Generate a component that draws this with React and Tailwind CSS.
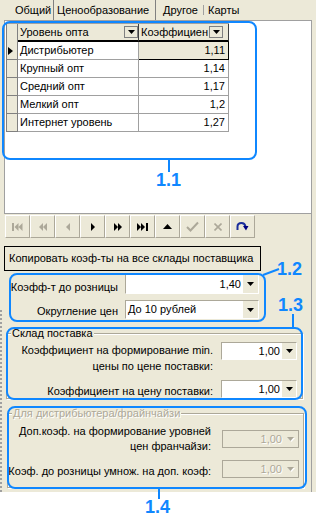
import React from 'react';

const rows = [
  { name: 'Дистрибьютер', k: '1,11', current: true },
  { name: 'Крупный опт', k: '1,14' },
  { name: 'Средний опт', k: '1,17' },
  { name: 'Мелкий опт', k: '1,2' },
  { name: 'Интернет уровень', k: '1,27' },
];

const GRAY = '#aca899';

const Arrow = ({ color = '#000' }) => (
  <svg width="7" height="4" viewBox="0 0 7 4">
    <path d="M0 0h7L3.5 4z" fill={color} />
  </svg>
);

const HeadBtn = () => (
  <span className="flex h-[12px] w-[14px] shrink-0 items-center justify-center border border-[#808080] bg-[#ece9d8]">
    <Arrow />
  </span>
);

function Tabs() {
  return (
    <div className="flex h-[20px] pl-[14px] leading-[20px]">
      <div className="w-[39px] pl-px">Общий</div>
      <div className="w-[103px] border-x border-[#808080] pl-[3px]">Ценообразование</div>
      <div className="w-[47px] pl-[7px]">Другое</div>
      <div className="my-[5px] w-px bg-[#a0a0a0]" />
      <div className="pl-[4px]">Карты</div>
    </div>
  );
}

function Grid() {
  return (
    <div className="w-[223px] border-l border-[#808080]">
      {/* header */}
      <div className="flex h-[19px] border-t border-[#a0a0a0]">
        <div className="w-[11px] border-r border-[#808080] bg-[#ece9d8]" />
        <div className="flex w-[121px] items-center border-r border-b-2 border-r-[#404040] border-b-black bg-[#ece9d8] pl-[2px]">
          <span className="flex-1 whitespace-nowrap">Уровень опта</span>
          <HeadBtn />
        </div>
        <div className="flex w-[90px] items-center border-r border-b-2 border-r-[#404040] border-b-black bg-[#ece9d8] pl-[2px] pr-[5px]">
          <span className="flex-1 whitespace-nowrap">Коэффициен</span>
          <HeadBtn />
        </div>
      </div>
      {rows.map((r) => (
        <div key={r.name} className="flex h-[18px]">
          <div className="flex w-[11px] items-center border-r border-b border-[#808080] bg-[#ece9d8] pl-[1px]">
            {r.current && (
              <svg width="5" height="8" viewBox="0 0 5 8">
                <path d="M0 0v8l5-4z" fill="#000" />
              </svg>
            )}
          </div>
          <div className="w-[121px] border-r border-b border-[#a0a0a0] pl-[2px] leading-[17px] whitespace-nowrap">
            {r.name}
          </div>
          <div
            className={
              r.current
                ? 'w-[90px] border-r border-b border-black bg-[#ece9d8] pr-[3px] text-right leading-[17px]'
                : 'w-[90px] border-r border-b border-[#a0a0a0] pr-[3px] text-right leading-[17px]'
            }
          >
            {r.k}
          </div>
        </div>
      ))}
    </div>
  );
}

function Icon({ kind, c }) {
  switch (kind) {
    case 'first':
      return (
        <svg width="11" height="8" viewBox="0 0 11 8">
          <rect x="0" y="0" width="2" height="8" fill={c} />
          <path d="M6.5 0v8L2.5 4zM10.5 0v8L6.5 4z" fill={c} />
        </svg>
      );
    case 'priorPage':
      return (
        <svg width="8" height="8" viewBox="0 0 8 8">
          <path d="M4 0v8L0 4zM8 0v8L4 4z" fill={c} />
        </svg>
      );
    case 'prior':
      return (
        <svg width="4" height="8" viewBox="0 0 4 8">
          <path d="M4 0v8L0 4z" fill={c} />
        </svg>
      );
    case 'next':
      return (
        <svg width="4" height="8" viewBox="0 0 4 8">
          <path d="M0 0v8l4-4z" fill={c} />
        </svg>
      );
    case 'nextPage':
      return (
        <svg width="8" height="8" viewBox="0 0 8 8">
          <path d="M0 0v8l4-4zM4 0v8l4-4z" fill={c} />
        </svg>
      );
    case 'last':
      return (
        <svg width="11" height="8" viewBox="0 0 11 8">
          <path d="M0 0v8l4-4zM4 0v8l4-4z" fill={c} />
          <rect x="9" y="0" width="2" height="8" fill={c} />
        </svg>
      );
    case 'insert':
      return (
        <svg width="9" height="5" viewBox="0 0 9 5">
          <path d="M0 5h9L4.5 0z" fill={c} />
        </svg>
      );
    case 'post':
      return (
        <svg width="13" height="11" viewBox="0 0 13 11">
          <path d="M1 6l3.5 3.5L12 1.5" stroke={c} strokeWidth="2" fill="none" />
        </svg>
      );
    case 'cancel':
      return (
        <svg width="8" height="8" viewBox="0 0 8 8">
          <path d="M0.5 0.5l7 7M7.5 0.5l-7 7" stroke={c} strokeWidth="1.6" />
        </svg>
      );
    default:
      return (
        <svg width="13" height="9" viewBox="0 0 13 9">
          <path d="M1.5 8V4.5C1.5 2 3.5 1 5.5 1S9 2 9.5 4.5" stroke="#1c2f9c" strokeWidth="2" fill="none" />
          <path d="M7 4h5.5L10 8.5z" fill="#000080" />
        </svg>
      );
  }
}

const navButtons = [
  ['first', GRAY],
  ['priorPage', GRAY],
  ['prior', GRAY],
  ['next', '#000'],
  ['nextPage', '#000'],
  ['last', '#000'],
  ['insert', '#000'],
  ['post', GRAY],
  ['cancel', GRAY],
  ['refresh', '#000080'],
];

function Navigator() {
  return (
    <div className="ml-[5px] mt-px flex h-[23px]">
      {navButtons.map(([k, c]) => (
        <div
          key={k}
          className="flex h-[23px] w-[25px] items-center justify-center border border-t-white border-l-white border-r-[#aca899] border-b-[#aca899] bg-[#ece9d8]"
        >
          <Icon kind={k} c={c} />
        </div>
      ))}
    </div>
  );
}

function Combo({ value, size, left = false, disabled = false, btn = 'w-[14px]' }) {
  return (
    <div
      className={
        disabled
          ? `flex shrink-0 items-center border border-[#aca899] bg-[#ece9d8] text-[#aca899] [text-shadow:1px_1px_0_#fff] ${size}`
          : `flex shrink-0 items-stretch border border-t-[#aca899] border-l-[#aca899] border-r-white border-b-white bg-white ${size}`
      }
    >
      <span
        className={
          left
            ? 'flex flex-1 items-center whitespace-nowrap pl-[2px]'
            : 'flex flex-1 items-center justify-end whitespace-nowrap pr-[2px]'
        }
      >
        {value}
      </span>
      <span className={disabled ? `flex items-center justify-center ${btn}` : `flex items-center justify-center bg-[#ece9d8] ${btn}`}>
        {disabled ? (
          <svg width="8" height="5" viewBox="0 0 8 5">
            <path d="M1 1h7L4.5 5z" fill="#fff" />
            <path d="M0 0h7L3.5 4z" fill={GRAY} />
          </svg>
        ) : (
          <Arrow />
        )}
      </span>
    </div>
  );
}

export default function App() {
  return (
    <div className="relative h-[518px] w-[316px] overflow-hidden bg-white font-['Liberation_Sans',Arial,sans-serif] text-[11px] text-black">
      <div className="relative h-[492px] bg-[#ece9d8]">
        <Tabs />
        <div className="h-[472px] w-[312px] border-r border-[#a0a0a0]">
          <div className="ml-[4px] h-[194px] border-b border-l border-t border-[#a0a0a0] bg-white pl-px pt-[2px]">
            <Grid />
          </div>

          <Navigator />

          <button className="ml-[4px] mt-[8px] block h-[25px] w-[257px] border border-black bg-[#ece9d8] pl-[4px] text-left leading-[23px]">
            Копировать коэф-ты на все склады поставщика
          </button>

          {/* retail coefficient */}
          <div className="mt-[3px] flex h-[20px] items-start">
            <div className="ml-[10px] w-[108px] whitespace-nowrap pt-[6px] text-right leading-[14px]">Коэфф-т до розницы</div>
            <div className="ml-[7px]">
              <Combo value="1,40" size="h-[20px] w-[134px]" btn="w-[15px]" />
            </div>
          </div>
          <div className="mt-[6px] flex h-[19px] items-start">
            <div className="ml-[10px] w-[108px] whitespace-nowrap pt-[4px] text-right leading-[14px]">Округление цен</div>
            <div className="ml-[7px]">
              <Combo value="До 10 рублей" left size="h-[19px] w-[134px]" btn="w-[15px]" />
            </div>
          </div>

          {/* Склад поставка */}
          <div className="relative ml-[6px] mt-[14px] h-[66px] w-[297px] border border-[#aca899] shadow-[inset_1px_1px_0_#fff,1px_1px_0_#fff]">
            <span className="absolute -top-[8px] left-[4px] bg-[#ece9d8] px-px leading-[15px]">Склад поставка</span>
            <div className="flex items-start pt-[8px]">
              <div className="w-[206px] text-right leading-[16px]">
                Коэффициент на формирование min.
                <br />
                цены по цене поставки:
              </div>
              <div className="ml-[8px]">
                <Combo value="1,00" size="h-[18px] w-[76px]" />
              </div>
            </div>
            <div className="mt-[6px] flex items-start">
              <div className="w-[206px] whitespace-nowrap pt-[4px] text-right leading-[15px]">Коэффициент на цену поставки:</div>
              <div className="ml-[8px]">
                <Combo value="1,00" size="h-[18px] w-[76px]" />
              </div>
            </div>
          </div>

          {/* Для дистрибьютера/фрайнчайзи */}
          <div className="relative ml-[7px] mt-[14px] h-[75px] w-[297px] border border-[#aca899] shadow-[inset_1px_1px_0_#fff,1px_1px_0_#fff]">
            <span className="absolute -top-[8px] left-[4px] bg-[#ece9d8] px-px leading-[15px] text-[#aca899] [text-shadow:1px_1px_0_#fff]">
              Для дистрибьютера/фрайнчайзи
            </span>
            <div className="flex items-start pt-[10px]">
              <div className="w-[203px] text-right leading-[15px]">
                Доп.коэф. на формирование уровней
                <br />
                цен франчайзи:
              </div>
              <div className="ml-[11px] mt-[6px]">
                <Combo value="1,00" disabled size="h-[18px] w-[77px]" />
              </div>
            </div>
            <div className="mt-[6px] flex items-start">
              <div className="w-[203px] whitespace-nowrap pt-[4px] text-right leading-[15px]">Коэф. до розницы умнож. на доп. коэф:</div>
              <div className="ml-[11px]">
                <Combo value="1,00" disabled size="h-[18px] w-[77px]" />
              </div>
            </div>
          </div>
        </div>

        {/* splitter edge */}
        <div className="absolute left-0 top-[310px] h-[182px] border-l-2 border-dotted border-[#a0a0a0]" />
      </div>

      {/* annotations */}
      <div className="pointer-events-none absolute left-[2px] top-[21px] h-[139px] w-[255px] rounded-[8px] border-2 border-[#0f87ff]" />
      <div className="absolute left-[168px] top-[159px] h-[13px] w-[2px] bg-[#0f87ff]" />
      <div className="absolute left-[156px] top-[171px] text-[18px] font-bold leading-[18px] text-[#0f87ff]">1.1</div>

      <div className="pointer-events-none absolute left-[9px] top-[273px] h-[49px] w-[257px] rounded-[8px] border-2 border-[#0f87ff]" />
      <svg className="absolute left-[260px] top-[264px]" width="22" height="14" viewBox="0 0 22 14">
        <path d="M3 11L19 5" stroke="#0f87ff" strokeWidth="2" />
      </svg>
      <div className="absolute left-[277px] top-[260px] text-[18px] font-bold leading-[18px] text-[#0f87ff]">1.2</div>

      <div className="pointer-events-none absolute left-[6px] top-[327px] h-[73px] w-[297px] rounded-[8px] border-2 border-[#0f87ff]" />
      <div className="absolute left-[292px] top-[314px] h-[14px] w-[2px] bg-[#0f87ff]" />
      <div className="absolute left-[278px] top-[296px] text-[18px] font-bold leading-[18px] text-[#0f87ff]">1.3</div>

      <div className="pointer-events-none absolute left-[7px] top-[406px] h-[83px] w-[300px] rounded-[8px] border-2 border-[#0f87ff]" />
      <div className="absolute left-[158px] top-[488px] h-[11px] w-[2px] bg-[#0f87ff]" />
      <div className="absolute left-[145px] top-[498px] text-[18px] font-bold leading-[18px] text-[#0f87ff]">1.4</div>
    </div>
  );
}
